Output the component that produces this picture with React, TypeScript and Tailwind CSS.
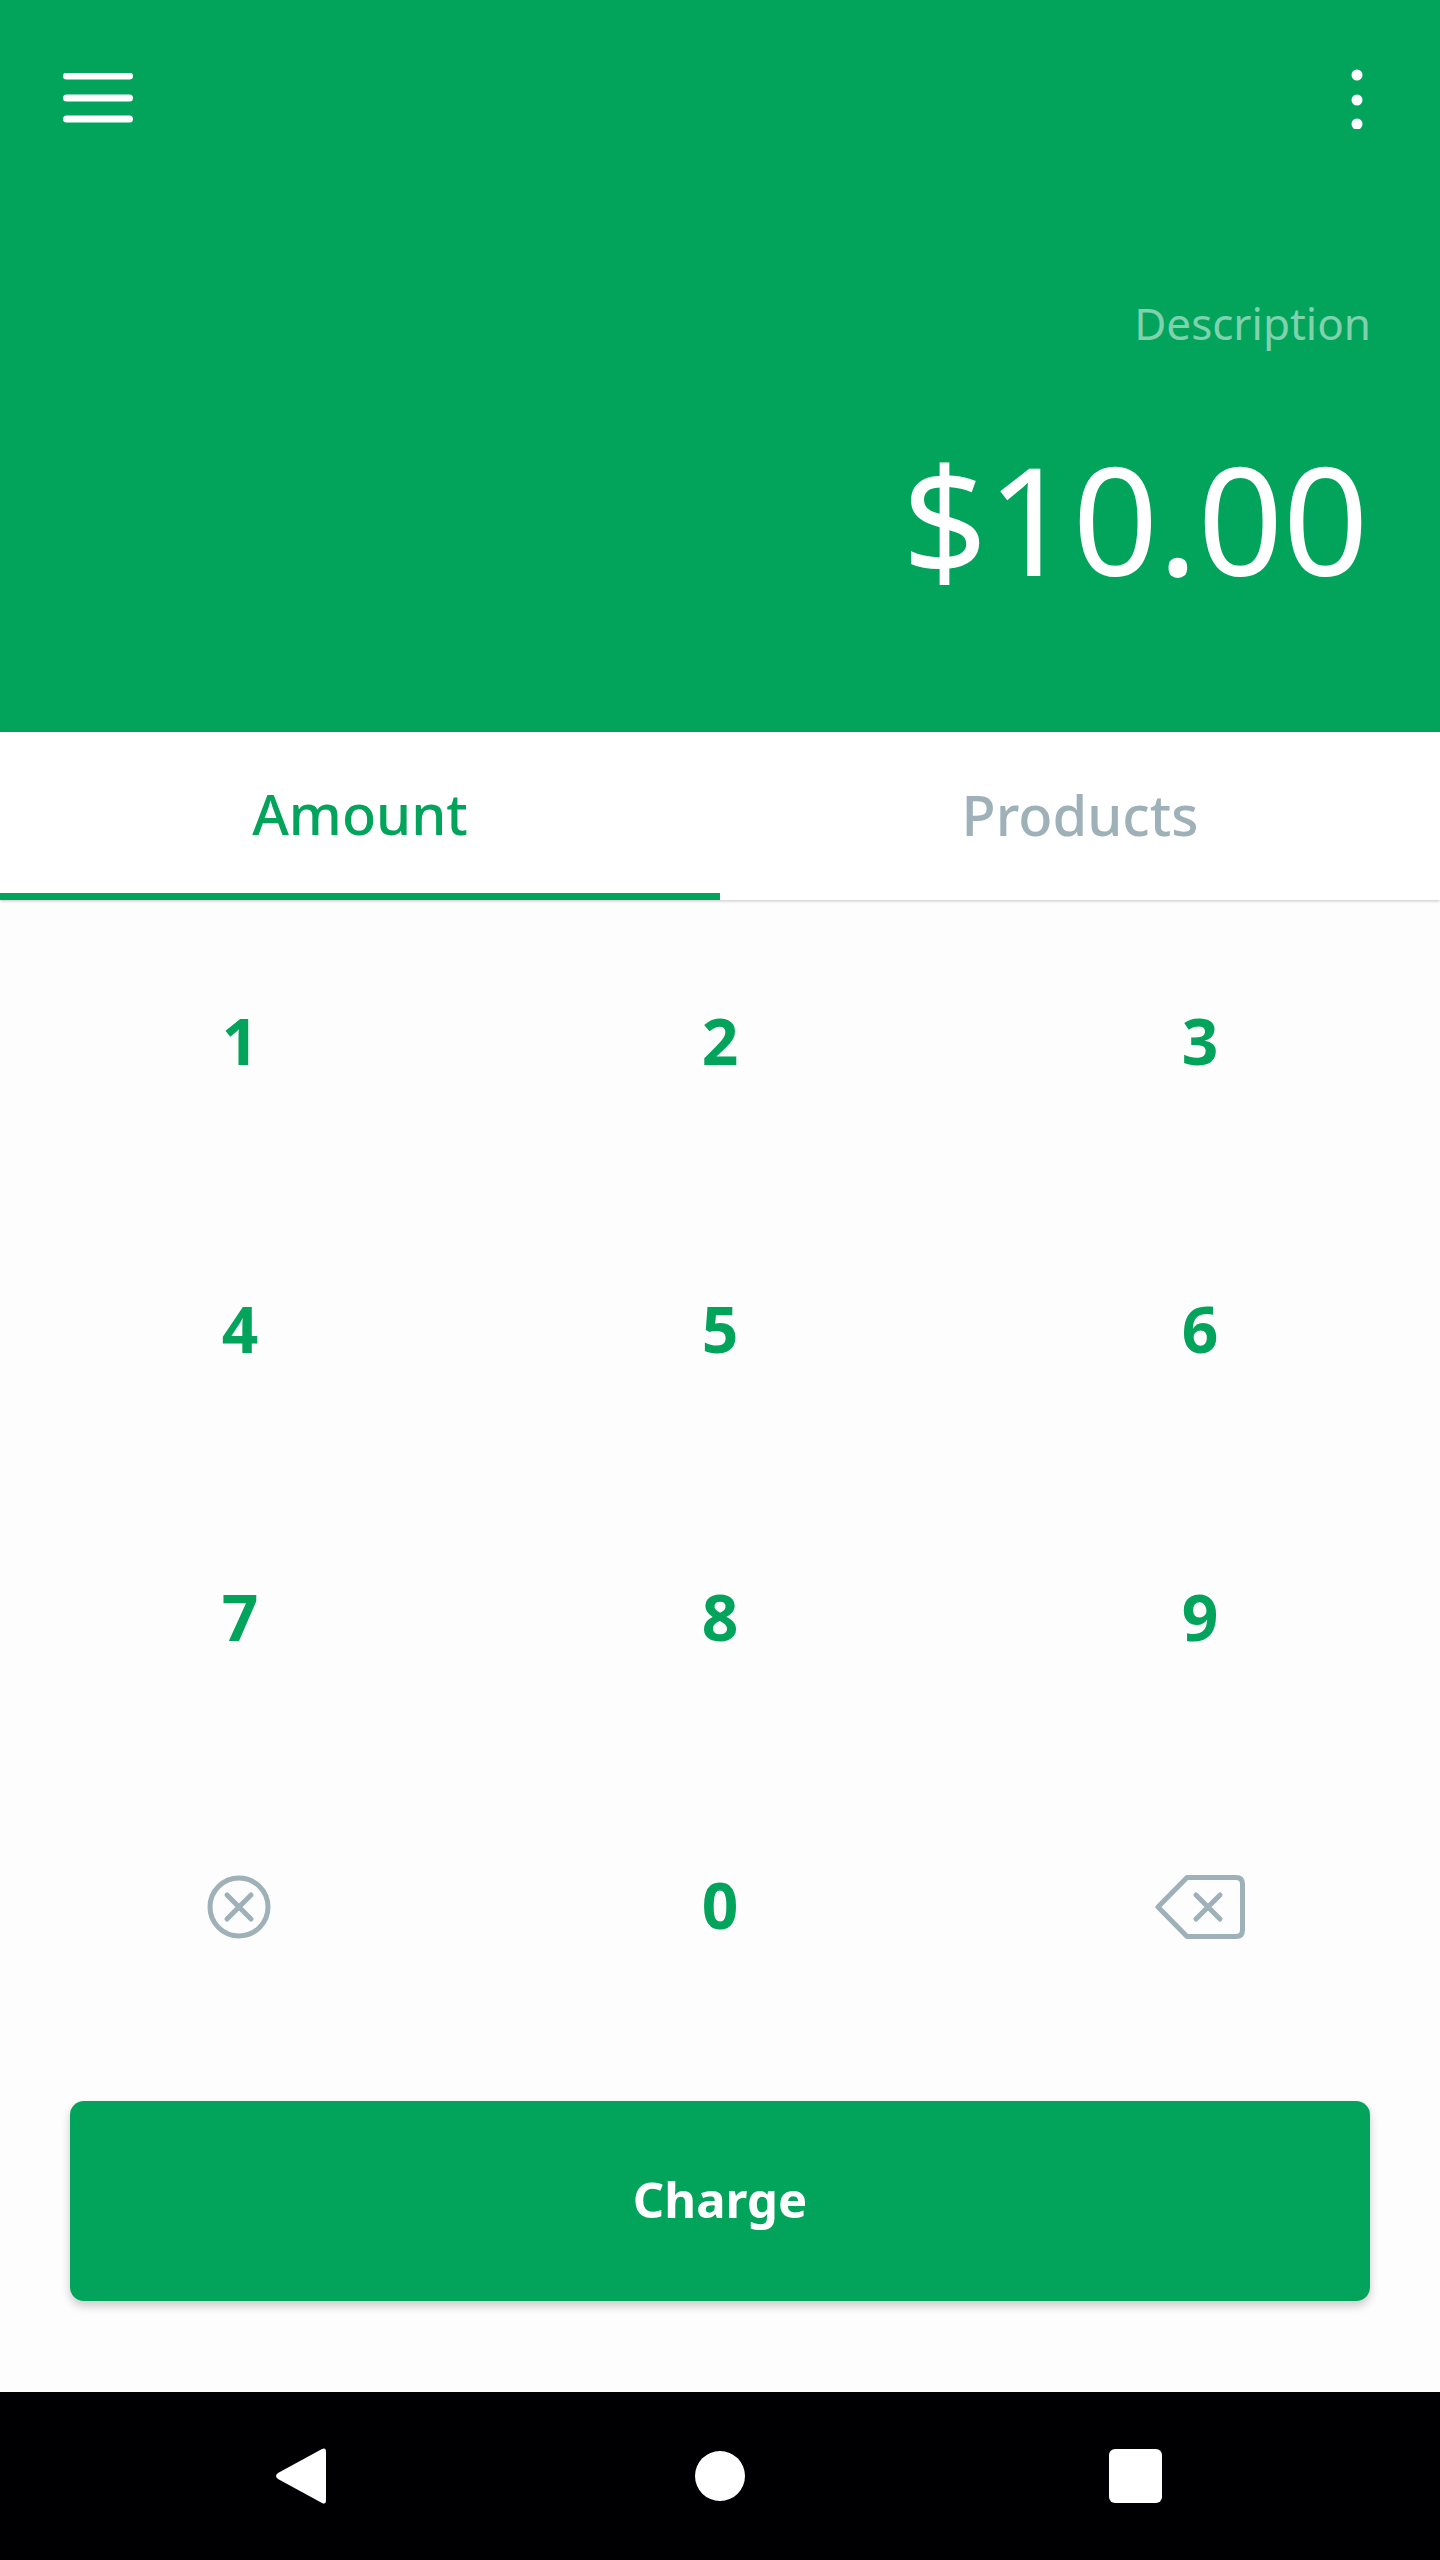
import React from "react";

const FONT = "font-['Noto_Sans','Open_Sans',sans-serif]";

function Digit({ d }: { d: string }) {
  return (
    <button className="flex items-center justify-center pb-[6px] text-[#02a45c] text-[64px] leading-none font-bold">
      {d}
    </button>
  );
}

function ClearIcon() {
  return (
    <svg width="64" height="64" viewBox="0 0 64 64" fill="none" stroke="#9eb0b8" strokeLinecap="round">
      <circle cx="32" cy="32" r="29" strokeWidth="5" />
      <path d="M20 20 L44 44 M44 20 L20 44" strokeWidth="5" />
    </svg>
  );
}

function BackspaceIcon() {
  return (
    <svg width="90" height="64" viewBox="0 0 90 64" fill="none" stroke="#9eb0b8" strokeLinecap="round" strokeLinejoin="round">
      <path d="M32 2.5 H81 Q87.5 2.5 87.5 9 V55 Q87.5 61.5 81 61.5 H32 L3 32 Z" strokeWidth="5" />
      <path d="M41 20 L65 44 M65 20 L41 44" strokeWidth="5" />
    </svg>
  );
}

export default function App() {
  return (
    <div className={`${FONT} flex h-[2560px] w-[1440px] flex-col bg-[#fdfdfd]`}>
      <header className="flex h-[732px] flex-col bg-[#02a45c] text-white">
        <div className="flex items-start justify-between pl-[63px] pr-[77px] pt-[73px]">
          <svg width="70" height="50" viewBox="0 0 70 50" fill="none" stroke="white" strokeWidth="7" strokeLinecap="round">
            <path d="M3.5 3 H66.5 M3.5 25 H66.5 M3.5 46 H66.5" />
          </svg>
          <svg width="12" height="60" viewBox="0 0 12 60" fill="white" className="-mt-[4px]">
            <circle cx="6" cy="6" r="5.5" />
            <circle cx="6" cy="31" r="5.5" />
            <circle cx="6" cy="55" r="5.5" />
          </svg>
        </div>
        <div className="mt-[164px] pr-[69px] text-right text-[44px] leading-[60px] text-white/50">Description</div>
        <div className="mt-[75px] pr-[72px] text-right text-[150px] leading-[180px] tracking-[-0.5px]">$10.00</div>
      </header>

      <nav className="relative z-10 grid h-[168px] grid-cols-2 bg-white shadow-[0_1px_3px_rgba(0,0,0,0.22)]">
        <div className="flex items-center justify-center border-b-[7px] border-[#02a45c] text-[56px] font-medium text-[#02a45c]">
          Amount
        </div>
        <div className="flex items-center justify-center pb-[5px] text-[56px] font-medium text-[#9eb0b8]">
          Products
        </div>
      </nav>

      <section className="grid h-[1152px] grid-cols-3 grid-rows-4">
        {["1", "2", "3", "4", "5", "6", "7", "8", "9"].map((d) => (
          <Digit key={d} d={d} />
        ))}
        <button className="flex items-center justify-center pb-[2px] pr-[2px]">
          <ClearIcon />
        </button>
        <Digit d="0" />
        <button className="flex items-center justify-center pb-[2px]">
          <BackspaceIcon />
        </button>
      </section>

      <div className="mx-[70px] mt-[49px] flex h-[200px] items-center justify-center rounded-[14px] bg-[#02a45c] pb-[2px] text-[49px] font-bold text-white shadow-[0_5px_10px_rgba(0,0,0,0.2)]">
        Charge
      </div>

      <footer className="mt-[91px] flex h-[168px] items-center bg-[#000003] pl-[275px]">
        <svg width="51" height="56" viewBox="0 0 51 56" fill="white" className="shrink-0">
          <path d="M47 1 Q51 -1 51 4 V52 Q51 57 47 55 L3 31 Q-1 28 3 25 Z" />
        </svg>
        <svg width="50" height="50" viewBox="0 0 50 50" fill="white" className="ml-[369px] shrink-0">
          <circle cx="25" cy="25" r="25" />
        </svg>
        <div className="ml-[364px] h-[54px] w-[53px] rounded-[6px] bg-white" />
      </footer>
    </div>
  );
}
